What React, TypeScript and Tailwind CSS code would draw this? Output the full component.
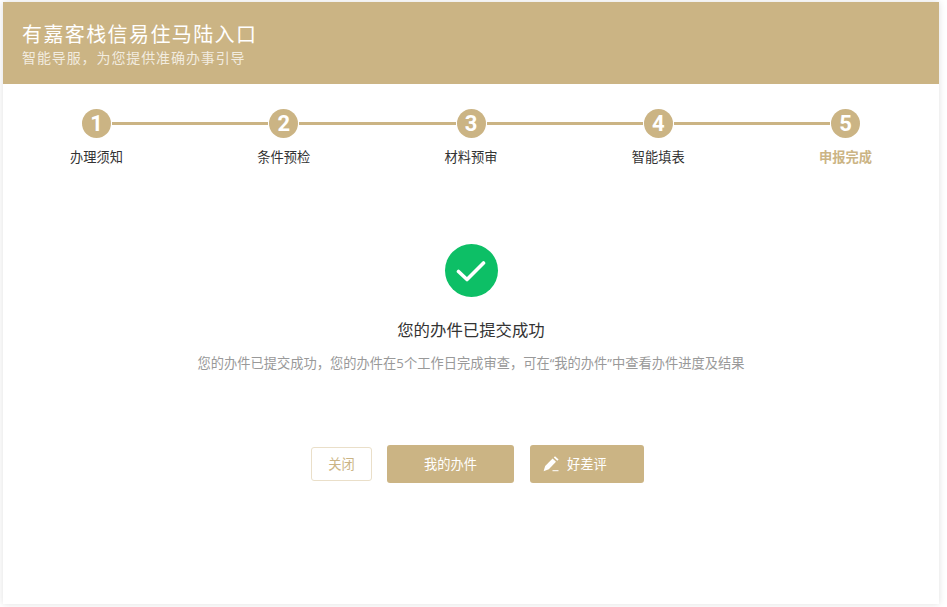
const steps = ['办理须知', '条件预检', '材料预审', '智能填表', '申报完成'];

const font = "font-['Open_Sans','Noto_Sans_CJK_SC',sans-serif]";

const App = () => {
  return (
    <div className={`h-[607px] w-[947px] overflow-hidden bg-white pt-[2px] pl-[3px] ${font}`}>
      <div className="flex h-[602px] w-[936px] flex-col bg-white shadow-[0_0_7px_rgba(0,0,0,0.13)]">
        <div className="h-[82px] bg-[#cbb484] pl-[19px] pt-[20px] text-white">
          <div className="text-[20px] leading-[26px] tracking-[1.4px]">有嘉客栈信易住马陆入口</div>
          <div className="text-[14px] leading-[20px] tracking-[0.9px] text-white/75">
            智能导服，为您提供准确办事引导
          </div>
        </div>

        <div className="flex items-center px-[79px] pt-[25px]">
          {steps.map((step, index) => (
            <div key={step} className={`flex items-center ${index < 4 ? 'flex-1' : ''}`}>
              <div className="flex h-[29px] w-[29px] shrink-0 items-center justify-center rounded-full bg-[#cbb484] font-['Roboto',sans-serif] text-[22px] font-bold leading-none text-white">
                {index + 1}
              </div>
              {index < 4 && <div className="mx-[1px] h-[3px] flex-1 bg-[#cbb484]" />}
            </div>
          ))}
        </div>

        <div className="mt-[9px] grid grid-cols-5">
          {steps.map((step, index) => (
            <div
              key={step}
              className={`text-center text-[13.25px] leading-[20px] ${
                index === 4 ? 'font-bold text-[#cbb484]' : 'text-[#333333]'
              }`}
            >
              {step}
            </div>
          ))}
        </div>

        <div className="mt-[77px] flex flex-col items-center">
          <div className="flex h-[53px] w-[53px] items-center justify-center rounded-full bg-[#0dbf66]">
            <svg width="30" height="22" viewBox="0 0 30 22" fill="none">
              <path
                d="M2.5 11.5 L11 19.5 L27.5 3"
                stroke="#ffffff"
                strokeWidth="3.6"
                strokeLinecap="round"
                strokeLinejoin="round"
              />
            </svg>
          </div>
          <div className="mt-[21px] text-[16.4px] leading-[24px] text-[#333333]">您的办件已提交成功</div>
          <div className="mt-[11px] text-[13.25px] leading-[20px] text-[#999999]">
            您的办件已提交成功，您的办件在5个工作日完成审查，可在“我的办件”中查看办件进度及结果
          </div>

          <div className="mt-[72px] flex items-center pl-[13px]">
            <button className="h-[34px] w-[61px] rounded-[3px] border border-[#eadfc9] bg-white pt-[2px] text-[13.25px] text-[#cbb484]">
              关闭
            </button>
            <button className="ml-[15px] h-[38px] w-[127px] rounded-[3px] bg-[#cbb484] pt-[2px] text-[13.25px] text-white">
              我的办件
            </button>
            <button className="ml-[16px] flex h-[38px] w-[114px] items-center rounded-[3px] bg-[#cbb484] pl-[13px] pt-[2px] text-[13.25px] text-white">
              <svg width="16" height="16" viewBox="0 0 16 16" fill="#ffffff" className="-mt-[2px]">
                <path d="M9.6 2.6 L13 5.8 L5.8 13.2 L0.6 15.2 L2.2 10 Z" />
                <path d="M10.8 1.4 L12 0.3 L15.6 3.6 L14.3 4.8 Z" />
                <rect x="9.5" y="14.2" width="6" height="1" />
              </svg>
              <span className="ml-[8px]">好差评</span>
            </button>
          </div>
        </div>
      </div>
    </div>
  );
};

export default App;
